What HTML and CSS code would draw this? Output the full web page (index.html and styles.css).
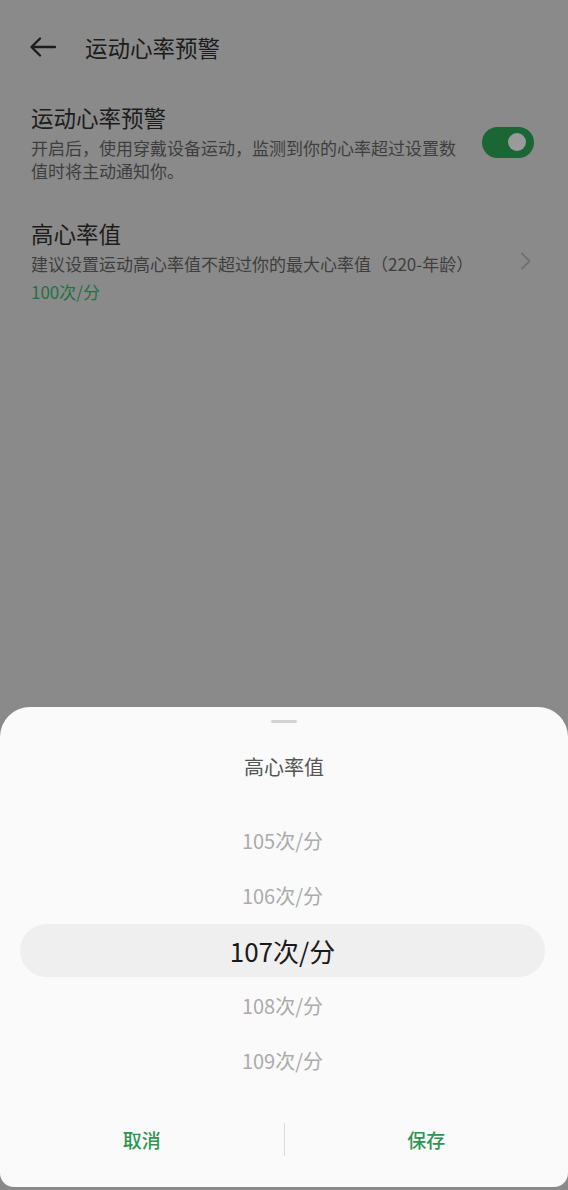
FILE: index.html
```
<!DOCTYPE html>
<html lang="zh-CN">
<head>
  <meta charset="UTF-8" />
  <meta name="viewport" content="width=device-width, initial-scale=1.0"/>
  <title>运动心率预警</title>
  <link rel="stylesheet" href="styles.css">
</head>
<body>
  <div class="page">
    <header class="topbar">
      <svg class="back" width="26" height="20" viewBox="0 0 26 20">
        <path d="M25 10 H2 M10 1.5 L1.5 10 L10 18.5" fill="none" stroke="#1c1c1c" stroke-width="2.3" stroke-linecap="round" stroke-linejoin="round"/>
      </svg>
      <h1>运动心率预警</h1>
    </header>

    <div class="item first">
      <div class="item-text">
        <div class="item-title">运动心率预警</div>
        <div class="item-desc">开启后，使用穿戴设备运动，监测到你的心率超过设置数值时将主动通知你。</div>
      </div>
      <div class="switch"><span class="knob"></span></div>
    </div>

    <div class="item second">
      <div class="item-text">
        <div class="item-title">高心率值</div>
        <div class="item-desc">建议设置运动高心率值不超过你的最大心率值（220-年龄）</div>
        <div class="item-value">100次/分</div>
      </div>
      <svg class="chevron" width="12" height="18" viewBox="0 0 12 18">
        <path d="M2 1.5 L9.5 9 L2 16.5" fill="none" stroke="#707070" stroke-width="1.8" stroke-linecap="round" stroke-linejoin="round"/>
      </svg>
    </div>

    <div class="sheet">
      <div class="handle"></div>
      <div class="sheet-title">高心率值</div>
      <div class="picker">
        <div class="opt">105次/分</div>
        <div class="opt">106次/分</div>
        <div class="opt selected">107次/分</div>
        <div class="opt">108次/分</div>
        <div class="opt">109次/分</div>
      </div>
      <div class="actions">
        <button class="act">取消</button>
        <span class="sep"></span>
        <button class="act">保存</button>
      </div>
    </div>
  </div>
</body>
</html>
```

FILE: styles.css
```
html, body {
  margin: 0;
  padding: 0;
}
body {
  background-color: #8a8a8a;
  font-family: "Noto Sans CJK SC", "Noto Sans", sans-serif;
  color: #1c1c1c;
}
.page {
  height: 1190px;
  display: flex;
  flex-direction: column;
}
.topbar {
  height: 94px;
  display: flex;
  align-items: center;
  padding-left: 30px;
}
.back {
  display: block;
  margin-right: 29px;
}
.topbar h1 {
  margin: 0;
  font-size: 22.5px;
  font-weight: 400;
  line-height: 30px;
  color: #1c1c1c;
}
.item {
  display: flex;
  align-items: center;
  padding-left: 31px;
}
.item.first {
  margin-top: 8px;
  padding-right: 34px;
}
.item.second {
  margin-top: 36px;
  padding-right: 36px;
}
.item-text {
  flex: 1;
}
.item.first .item-text {
  margin-right: 20px;
}
.item-title {
  font-size: 22.5px;
  line-height: 30px;
  color: #1c1c1c;
}
.item-desc {
  margin-top: 4px;
  font-size: 17px;
  line-height: 23px;
  color: #3e3e3e;
}
.item.second .item-desc {
  line-height: 24px;
}
.item-value {
  margin-top: 4px;
  font-size: 17px;
  line-height: 24px;
  color: #1f7242;
}
.switch {
  width: 52px;
  height: 31px;
  border-radius: 16px;
  background-color: #1a6634;
  display: flex;
  align-items: center;
  justify-content: flex-end;
  padding-right: 8px;
  box-sizing: border-box;
}
.knob {
  width: 18px;
  height: 18px;
  border-radius: 50%;
  background-color: #9a9a9a;
}
.chevron {
  display: block;
}
.sheet {
  margin-top: auto;
  margin-bottom: 3px;
  height: 480px;
  box-sizing: border-box;
  background-color: #fafafa;
  border-radius: 30px 30px 14px 14px;
  padding-top: 13px;
  display: flex;
  flex-direction: column;
}
.handle {
  width: 26px;
  height: 3px;
  border-radius: 2px;
  background-color: #d2d2d2;
  margin: 0 auto;
}
.sheet-title {
  margin-top: 31px;
  text-align: center;
  font-size: 20px;
  line-height: 26px;
  color: #555;
}
.picker {
  margin-top: 33px;
  padding: 0 23px 0 20px;
}
.opt {
  height: 55px;
  line-height: 55px;
  text-align: center;
  font-size: 20px;
  color: #ababab;
}
.opt.selected {
  height: 53px;
  line-height: 53px;
  margin: 1px 0;
  border-radius: 27px;
  background-color: #efefef;
  font-size: 26px;
  color: #1a1a1a;
}
.actions {
  margin-top: 23px;
  height: 56px;
  display: flex;
  align-items: center;
}
.act {
  flex: 1;
  border: none;
  background: none;
  font-family: inherit;
  font-size: 19px;
  font-weight: 500;
  color: #2e9552;
  height: 56px;
  padding: 0;
}
.sep {
  width: 1px;
  height: 33px;
  background-color: #dcdcdc;
}
```
